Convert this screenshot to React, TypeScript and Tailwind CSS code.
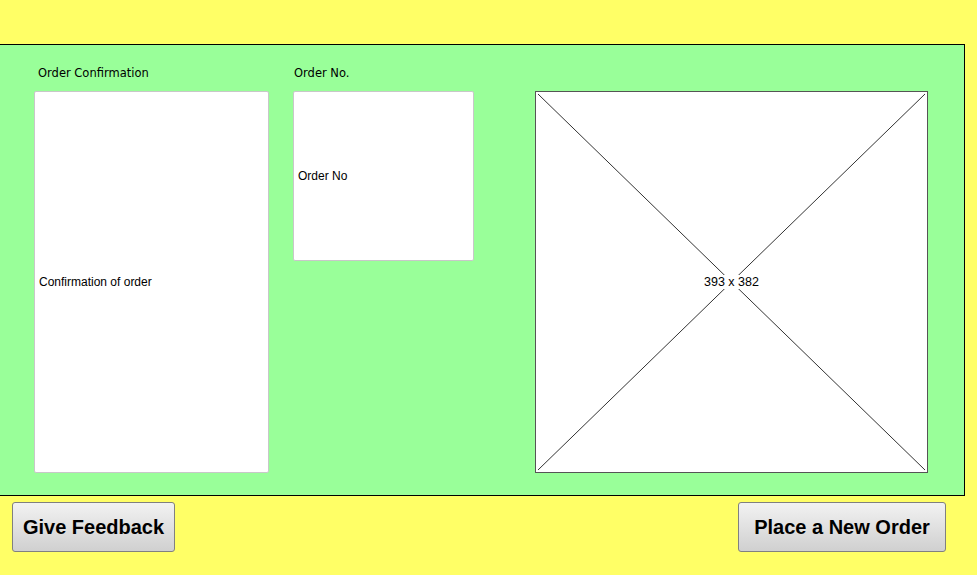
import React from "react";

export default function App() {
  return (
    <div className="w-[977px] h-[575px] bg-[#ffff66] overflow-hidden flex flex-col pt-[44px]" style={{ fontFamily: '"Liberation Sans", Arial, sans-serif' }}>
      <div className="ml-[-1px] w-[966px] h-[452px] bg-[#99ff99] border border-black flex flex-row pt-[20px] pl-[34px]">
        <div className="flex flex-col w-[235px]">
          <div className="h-[16px] pl-[4px] text-[11.5px] leading-[16px] text-black mb-[10px]" style={{ fontFamily: '"Comic Sans MS", "DejaVu Sans", sans-serif' }}>Order Confirmation</div>
          <div className="w-[235px] h-[382px] bg-white border border-[#c8c8c8] rounded-[2px] flex items-center pl-[4px] text-[12px] text-black">Confirmation of order</div>
        </div>
        <div className="flex flex-col w-[181px] ml-[24px]">
          <div className="h-[16px] pl-[1px] text-[11.5px] leading-[16px] text-black mb-[10px]" style={{ fontFamily: '"Comic Sans MS", "DejaVu Sans", sans-serif' }}>Order No.</div>
          <div className="w-[181px] h-[170px] bg-white border border-[#c8c8c8] rounded-[2px] flex items-center pl-[4px] text-[12px] text-black">Order No</div>
        </div>
        <div className="ml-[61px] mt-[26px] relative w-[393px] h-[382px] bg-white border border-[#555555] flex items-center justify-center">
          <svg className="absolute inset-0" width="391" height="380" viewBox="0 0 391 380">
            <line x1="2" y1="2" x2="389" y2="378" stroke="#333" strokeWidth="1" />
            <line x1="389" y1="2" x2="2" y2="378" stroke="#333" strokeWidth="1" />
          </svg>
          <span className="relative bg-white px-[2px] text-[12.5px] leading-[14px] text-black">393 x 382</span>
        </div>
      </div>
      <div className="flex flex-row justify-between mt-[6px] pl-[12px] pr-[31px]">
        <button className="w-[163px] h-[50px] rounded-[3px] border border-[#808080] bg-gradient-to-b from-[#f2f2f2] to-[#d0d0d0] text-[20px] font-bold text-black">Give Feedback</button>
        <button className="w-[208px] h-[50px] rounded-[3px] border border-[#808080] bg-gradient-to-b from-[#f2f2f2] to-[#d0d0d0] text-[20px] font-bold text-black">Place a New Order</button>
      </div>
    </div>
  );
}
